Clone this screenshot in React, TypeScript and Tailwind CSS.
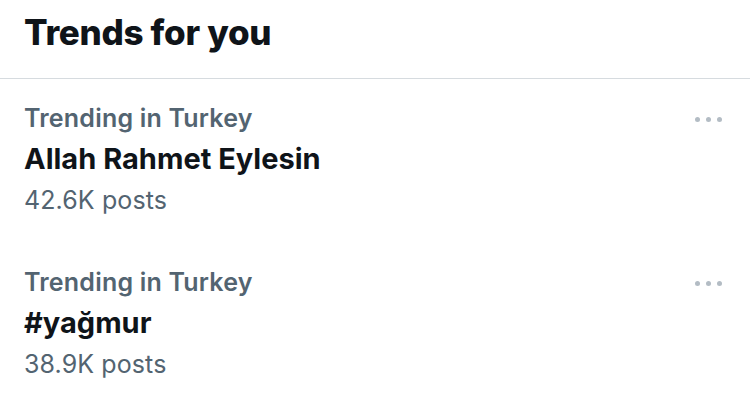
const TRENDS = [
  { place: "Trending in Turkey", topic: "Allah Rahmet Eylesin", posts: "42.6K posts" },
  { place: "Trending in Turkey", topic: "#yağmur", posts: "38.9K posts" },
];

function MoreDots() {
  return (
    <div className="flex items-center gap-[6px] self-start pt-[20px]">
      <span className="w-[5px] h-[5px] rounded-full bg-[#b3bcc4]" />
      <span className="w-[5px] h-[5px] rounded-full bg-[#b3bcc4]" />
      <span className="w-[5px] h-[5px] rounded-full bg-[#b3bcc4]" />
    </div>
  );
}

export default function App() {
  return (
    <div
      className="w-[750px] h-[417px] bg-white overflow-hidden"
      style={{ fontFamily: "Inter, 'Noto Sans', sans-serif" }}
    >
      {/* Header */}
      <div className="h-[79px] px-[24px] pt-[9px] border-b border-[#d6dbdf]">
        <h2 className="text-[35px] leading-[46px] font-extrabold text-[#0f1419] tracking-[-0.3px]">
          Trends for you
        </h2>
      </div>

      {/* Trend list */}
      <div className="flex flex-col">
        {TRENDS.map((t, i) => (
          <div key={i} className="flex justify-between pl-[24px] pr-[28px] pt-[18px] h-[164px]">
            <div className="flex flex-col">
              <span className="text-[25px] leading-[42px] font-semibold text-[#536471] tracking-[0.2px]">
                {t.place}
              </span>
              <span className="text-[29px] leading-[40px] font-bold text-[#0f1419]">
                {t.topic}
              </span>
              <span className="text-[25px] leading-[42px] text-[#536471] tracking-[0.1px]">
                {t.posts}
              </span>
            </div>
            <MoreDots />
          </div>
        ))}
      </div>
    </div>
  );
}
